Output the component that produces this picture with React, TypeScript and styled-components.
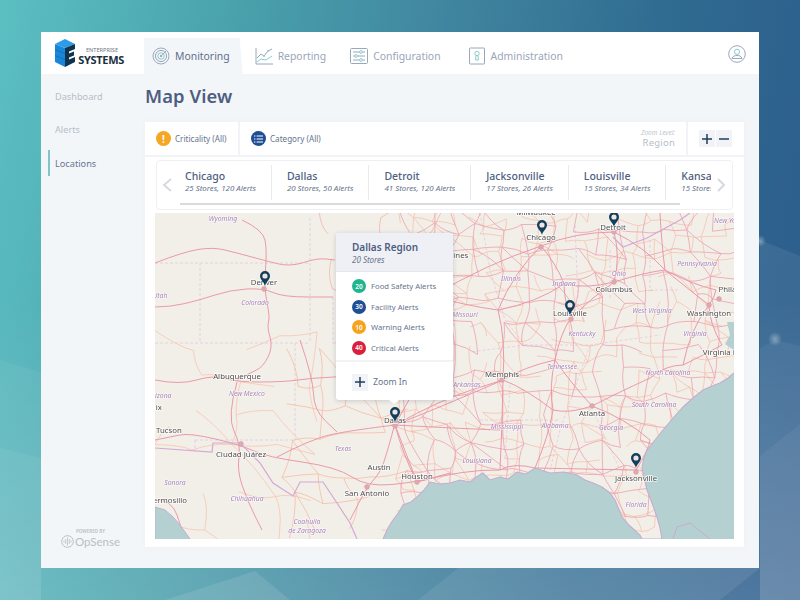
import React from "react";
import styled, { createGlobalStyle } from "styled-components";

const Global = createGlobalStyle`
  html, body { margin: 0; padding: 0; width: 800px; height: 600px; overflow: hidden; }
  body { font-family: "Noto Sans", "Open Sans", sans-serif; }
  * { box-sizing: border-box; }
`;

const Page = styled.div`
  position: relative; width: 800px; height: 600px; padding: 32px 41px; overflow: hidden;
  background: linear-gradient(100deg, #5bbfc2 0%, #4aa3ad 25%, #40859f 50%, #2f6a90 75%, #2d5b8c 100%);
`;
const Backdrop = styled.svg`position: absolute; left: 0; top: 0; width: 800px; height: 600px;`;
const Window = styled.div`
  position: relative; width: 718px; height: 536px; display: flex; flex-direction: column; background: #f3f6f9;
`;
const Header = styled.header`
  height: 42px; flex: none; background: #fff; display: flex; align-items: flex-end; position: relative;
`;
const LogoBox = styled.div`
  width: 103px; height: 42px; flex: none; display: flex; align-items: center; padding: 0 0 0 14px; gap: 3px;
`;
const LogoWords = styled.div`display: flex; flex-direction: column; align-items: flex-end; width: 46px; margin-top: 4px;`;
const LogoTop = styled.span`font-size: 5.6px; line-height: 8px; color: #6d7680; margin-right: 6px;`;
const LogoBottom = styled.span`font-size: 11px; line-height: 11px; font-weight: 700; color: #1b2f40; letter-spacing: -0.3px;`;
const Tabs = styled.nav`display: flex; gap: 4px; height: 36px; align-items: stretch;`;
const Tab = styled.div<{ $active?: boolean; $after?: number }>`
  display: flex; align-items: center; gap: 5px; padding: ${p => (p.$active ? "0 13px 0 8px" : "0 8px")};
  margin-right: ${p => p.$after ?? 0}px;
  background: ${p => (p.$active ? "#f3f6f9" : "transparent")};
  color: ${p => (p.$active ? "#5f6f8c" : "#9aa5b8")};
  font-size: 10.4px;
  clip-path: ${p => (p.$active ? "polygon(0 0, 97% 0, 100% 100%, 0 100%)" : "none")};
`;
const TabIcon = styled.svg`width: 18px; height: 18px; flex: none;`;
const UserIcon = styled.svg`position: absolute; right: 13px; top: 13px; width: 18px; height: 18px;`;
const Body = styled.div`flex: 1; display: flex; min-height: 0;`;
const Sidebar = styled.aside`
  width: 104px; flex: none; display: flex; flex-direction: column; padding: 9px 0 19px 7px;
`;
const SideItem = styled.div<{ $active?: boolean }>`
  height: 26px; flex: none; margin-bottom: 7.5px; display: flex; align-items: center; padding-left: 5px;
  border-left: 2px solid ${p => (p.$active ? "#84c3c8" : "transparent")};
  color: ${p => (p.$active ? "#66768e" : "#b6bdca")};
  font-size: 9.2px;
`;
const Powered = styled.div`
  margin-top: auto; display: flex; flex-direction: column; align-items: center; width: 51px; margin-left: 17px; color: #b9bec6;
`;
const PoweredBy = styled.span`font-size: 4.6px; line-height: 6px; font-weight: 600;`;
const OpSense = styled.div`display: flex; align-items: center; gap: 1px; font-family: "Lato", sans-serif; font-size: 11.5px; line-height: 15px;`;
const Main = styled.main`flex: 1; display: flex; flex-direction: column; min-width: 0; padding-right: 15px;`;
const Title = styled.h1`
  margin: 0; height: 48px; flex: none; display: flex; align-items: center; padding-bottom: 5px;
  font-size: 18.4px; font-weight: 600; color: #4e5e80; letter-spacing: 0.1px;
`;
const Panel = styled.section`background: #fff; flex: 1; margin-bottom: 21px; display: flex; flex-direction: column; box-shadow: 0 0 6px rgba(90,110,140,.05);`;
const Toolbar = styled.div`height: 35px; flex: none; display: flex; align-items: stretch; border-bottom: 2px solid #f1f3f6;`;
const Filter = styled.div<{ $width: number; $divided?: boolean }>`
  width: ${p => p.$width}px; flex: none; display: flex; align-items: center; gap: 4px; padding-left: 11px;
  border-right: ${p => (p.$divided ? 2 : 0)}px solid #f1f3f6;
  font-size: 8.1px; color: #66748c;
`;
const FilterDot = styled.span<{ $color: string }>`
  width: 15px; height: 15px; border-radius: 50%; background: ${p => p.$color}; flex: none;
  display: flex; align-items: center; justify-content: center; color: #fff; font-size: 10px; font-weight: 700;
`;
const Spacer = styled.div`flex: 1;`;
const ZoomLabel = styled.div`
  display: flex; flex-direction: column; align-items: flex-end; justify-content: center; padding-right: 11px;
  border-right: 2px solid #f1f3f6;
`;
const ZoomSmall = styled.span`font-size: 6.5px; line-height: 8px; font-style: italic; color: #c1c6d0;`;
const ZoomValue = styled.span`font-size: 9.5px; line-height: 12px; color: #b6bdca; letter-spacing: 0.2px;`;
const ZoomBtns = styled.div`flex: 0 0 56px; display: flex; align-items: center; gap: 1px; padding: 0 10px 0 11px;`;
const SquareBtn = styled.div`
  width: 16px; height: 17px; flex: none; background: #f1f3f7; display: flex; align-items: center; justify-content: center;
`;
const Glyph = styled.svg`width: 12px; height: 12px;`;
const Carousel = styled.div`
  height: 50px; flex: none; margin: 3px 11px 3px 11px; border: 1px solid #eef0f3; border-radius: 4px; position: relative;
  display: flex; align-items: flex-start; padding-top: 4px;
`;
const Chevron = styled.svg<{ $side: "left" | "right" }>`
  width: ${p => (p.$side === "left" ? 16 : 14)}px; height: 16px; flex: none; margin: 12px ${p => (p.$side === "left" ? 0 : 7)}px 0 0;
`;
const Track = styled.div`flex: 1; overflow: hidden; display: flex; min-width: 0; height: 36px; margin-left: -3px;`;
const City = styled.div`
  flex: none; height: 35px; padding: 4px 15px 0 15px; border-right: 1px solid #e8ebef; display: flex; flex-direction: column;
  &:last-child { border-right: 0; }
`;
const CityName = styled.span`font-size: 10.5px; line-height: 14px; font-weight: 500; color: #4e5e80;`;
const CityMeta = styled.span`font-size: 7.9px; line-height: 11px; font-style: italic; color: #66748c; white-space: nowrap;`;
const Scrollbar = styled.div`position: absolute; left: 23px; bottom: 4px; width: 500px; height: 2px; background: #d9dbde;`;
const MapFrame = styled.div`position: relative; flex: none; width: 579px; height: 326px; margin-left: 10px; overflow: hidden;`;
const MapSvg = styled.svg`display: block; width: 579px; height: 326px; filter: blur(0.35px);`;
const CityLabel = styled.text`
  font-family: "Noto Sans", sans-serif; font-size: 7.8px; fill: #4f4f4f; text-anchor: middle;
  paint-order: stroke; stroke: rgba(255,255,255,.75); stroke-width: 1.6px;
`;
const RegionLabel = styled.text`
  font-family: "Noto Sans", sans-serif; font-size: 6.8px; font-style: italic; fill: #a884b8; text-anchor: middle;
  paint-order: stroke; stroke: rgba(255,255,255,.6); stroke-width: 1.2px;
`;
const Popup = styled.div`
  position: absolute; left: 181px; top: 20px; width: 117px; height: 167px; background: #fff; border-radius: 3px;
  box-shadow: 0 1px 5px rgba(60,70,90,.22); display: flex; flex-direction: column;
  &::after { content: ""; position: absolute; left: 53px; bottom: -4px; border: 5px solid transparent; border-bottom: 0; border-top: 4px solid #fff; }
`;
const PopupHead = styled.div`
  height: 39px; flex: none; background: #eef0f5; border-radius: 3px 3px 0 0; padding: 7px 0 0 16px; border-bottom: 1px solid #e4e7ec;
  display: flex; flex-direction: column;
`;
const PopupTitle = styled.span`font-size: 10px; line-height: 14px; font-weight: 600; color: #4e5e80;`;
const PopupSub = styled.span`font-size: 8px; line-height: 11px; font-style: italic; color: #66748c;`;
const AlertList = styled.div`flex: none; height: 90px; padding: 4px 0 0 16px; border-bottom: 2px solid #f1f3f6; display: flex; flex-direction: column;`;
const AlertRow = styled.div`height: 20.5px; flex: none; display: flex; align-items: center; gap: 5px; font-size: 7.7px; color: #66748c;`;
const Badge = styled.span<{ $color: string }>`
  width: 14px; height: 14px; border-radius: 50%; background: ${p => p.$color}; color: #fff; flex: none;
  display: flex; align-items: center; justify-content: center; font-size: 6.5px; font-weight: 600;
`;
const ZoomIn = styled.div`flex: 1; display: flex; align-items: center; gap: 5px; padding: 2px 0 0 16px; font-size: 8.7px; color: #66748c;`;

// ---------- map data (page coordinates; viewBox maps them into the frame) ----------
const rng = (() => { let s = 12345; return () => (s = (s * 16807) % 2147483647) / 2147483647; })();
const f = (v: number) => v.toFixed(1);
function curve(a: [number, number], b: [number, number], amount: number) {
  const mx = (a[0] + b[0]) / 2 + (rng() - .5) * amount, my = (a[1] + b[1]) / 2 + (rng() - .5) * amount;
  return `M${f(a[0])} ${f(a[1])}Q${f(mx)} ${f(my)} ${f(b[0])} ${f(b[1])}`;
}
function mesh(x0: number, x1: number, y0: number, y1: number, step: number, jit: number, keep: number) {
  const cols = Math.ceil((x1 - x0) / step) + 1, rows = Math.ceil((y1 - y0) / step) + 1;
  const pts: [number, number][][] = [];
  for (let r = 0; r < rows; r++) {
    pts.push([]);
    for (let c = 0; c < cols; c++) pts[r].push([x0 + c * step + (rng() - .5) * jit, y0 + r * step + (rng() - .5) * jit]);
  }
  let d = "";
  const w = step * .35;
  for (let r = 0; r < rows; r++) for (let c = 0; c < cols; c++) {
    const p = pts[r][c];
    if (c + 1 < cols && rng() < keep) d += curve(p, pts[r][c + 1], w);
    if (r + 1 < rows && rng() < keep) d += curve(p, pts[r + 1][c], w);
    if (c + 1 < cols && r + 1 < rows && rng() < keep * .3) d += curve(p, pts[r + 1][c + 1], w);
  }
  return d;
}
function smooth(d: string) {
  return d.split("M").filter(Boolean).map(sub => {
    const n = sub.split(/[L\s]+/).filter(Boolean).map(Number);
    const pts: [number, number][] = [];
    for (let i = 0; i < n.length; i += 2) pts.push([n[i], n[i + 1]]);
    let out = `M${pts[0][0]} ${pts[0][1]}`;
    for (let i = 1; i < pts.length - 1; i++) {
      out += `Q${pts[i][0]} ${pts[i][1]} ${f((pts[i][0] + pts[i + 1][0]) / 2)} ${f((pts[i][1] + pts[i + 1][1]) / 2)}`;
    }
    const e = pts[pts.length - 1];
    return out + `L${e[0]} ${e[1]}`;
  }).join("");
}
const eastPink = mesh(405, 745, 205, 500, 24, 14, .78);
const eastOrange = mesh(400, 745, 205, 520, 17, 11, .6);
const midOrange = mesh(290, 410, 350, 535, 30, 18, .6);
const westOrange = mesh(160, 300, 340, 535, 38, 22, .42);
const northOrange = mesh(325, 420, 210, 350, 28, 16, .55);

const westPink = [
  "M155 263L183 252L213 247L237 253L263 260L290 267L317 258L335 260",
  "M242 220L263 230L267 250L264 288L270 317L267 327L273 347L263 367L250 373L237 380",
  "M155 307L170 307L200 300L230 290L263 288L283 297L333 297",
  "M155 380L180 385L213 375L237 382L283 382L313 378L337 377L395 372",
  "M237 382L227 417L241 445L237 470L247 500L262 530",
  "M155 440L170 437L190 433L241 445L267 457L337 467L367 487L417 482L450 473",
  "M395 423L388 450L380 473L367 487L350 520",
  "M395 425L337 432L307 442L277 457",
  "M395 425L417 482",
  "M395 425L440 400L503 380",
  "M395 425L450 428L500 430",
  "M300 340L313 378L314 410L337 432",
  "M155 500L172 500L182 530",
].map(smooth);
const nodes: Record<string, [number, number]> = {
  chi: [541, 246], det: [614, 232], col: [614, 282], lou: [571, 318], mem: [503, 380], atl: [592, 406],
  dal: [395, 425], stl: [498, 310], nas: [555, 360], cha: [650, 378], ral: [683, 365], bir: [553, 410],
  no: [500, 470], hou: [417, 482], vab: [722, 345], phi: [716, 290], pit: [665, 270], jax: [636, 470],
  was: [709, 305], ind: [564, 284], kc: [433, 296], tul: [425, 370], sav: [650, 440], mob: [535, 468], top: [660, 213],
};
const edges = "chi-ind ind-lou lou-nas nas-atl nas-bir bir-atl atl-sav sav-jax atl-cha cha-ral ral-vab ral-was was-phi phi-pit pit-col col-ind col-det det-chi chi-stl stl-ind stl-mem mem-nas mem-bir stl-kc kc-tul tul-dal dal-mem mem-no no-mob mob-jax mob-bir no-hou hou-dal pit-was lou-col was-vab top-pit chi-kc det-pit".split(" ");
const mainRoads = edges.map(e => {
  const [a, b] = e.split("-");
  return curve(nodes[a], nodes[b], 14);
}).join("");

const sea = "M383 539L388 528L393 520L399 512L403 505L411 502L417 497L424 490L430 482L440 484L450 483L460 480L470 482L478 476L483 473L490 480L500 477L508 479L517 472L526 474L535 468L550 473L564 472L577 475L585 480L593 483L602 487L610 493L615 500L618 507L622 517L630 526L640 535L642 539L662 539L660 528L657 517L652 503L647 490L644 478L642 467L644 458L647 450L655 440L663 430L673 418L683 407L693 398L703 390L712 386L720 383L728 378L734 373L745 360L745 545L380 545Z";
const baja = "M155 507L165 510L173 517L180 525L190 539L155 545Z";
const chesa = "M727 322L730 335L725 344L734 350L740 345L736 322Z";
const borders = [
  "M155 448L212 452L213 443L240 443L260 463L273 483L293 496L300 482L323 482L337 503L350 523L357 539",
  "M613 237L623 247L647 238L680 220L690 213",
  "M673 539L677 527L690 523L710 539",
];
const stateLines = [
  "M200 263V343M155 263H310M155 343H310M310 218V343M295 343V440M195 440H295M195 440V452M333 343H420M333 297V343M420 343V385M420 385L460 392",
  "M480 213L490 270L505 320L525 345M525 345L470 352M525 345L590 345L660 335M575 225L578 300M610 250V300M650 240V290L680 290M590 345L560 430L550 470M510 385L505 460M595 415L620 470L640 470M480 420H560",
];
const cities: [string, number, number][] = [
  ["Denver", 264, 285], ["Albuquerque", 237, 379], ["Phoenix", 147, 410], ["Tucson", 169, 433], ["Ciudad Juárez", 241, 457],
  ["Austin", 379, 470], ["Houston", 417, 479], ["San Antonio", 367, 496], ["Hermosillo", 167, 503], ["Dallas", 395, 423],
  ["Chicago", 541, 240], ["Detroit", 613, 230], ["Milwaukee", 536, 215], ["Columbus", 614, 292], ["Louisville", 570, 316],
  ["Memphis", 502, 377], ["Atlanta", 592, 416], ["Washington", 709, 316], ["Philadelphia", 741, 292], ["Virginia Beach", 729, 355],
  ["Jacksonville", 636, 481], ["Des Moines", 447, 258],
];
const regions: [string, number, number][] = [
  ["Wyoming", 223, 221], ["Utah", 160, 298], ["Colorado", 255, 305], ["Arizona", 160, 398], ["New Mexico", 247, 396], ["Texas", 343, 451],
  ["Sonora", 175, 485], ["Chihuahua", 247, 501], ["Coahuila", 307, 524], ["de Zaragoza", 307, 533], ["Nebraska", 350, 252], ["Missouri", 465, 317],
  ["Illinois", 511, 281], ["Indiana", 564, 286], ["Ohio", 619, 276], ["Pennsylvania", 697, 266], ["New York", 728, 223], ["Kentucky", 582, 336],
  ["West Virginia", 652, 313], ["Virginia", 695, 336], ["Tennessee", 562, 369], ["North Carolina", 668, 375], ["South Carolina", 654, 407],
  ["Arkansas", 467, 387], ["Mississippi", 507, 429], ["Alabama", 555, 428], ["Georgia", 611, 430], ["Louisiana", 477, 463], ["Florida", 636, 507],
];
const pins: [number, number][] = [[265, 286], [395, 422], [542, 235], [614, 227], [570, 315], [636, 468]];
const hubs: [number, number][] = [[264, 289], [395, 426], [541, 247], [614, 232], [571, 319], [636, 472], [502, 380], [592, 406], [709, 305], [417, 482], [367, 487], [241, 444], [614, 282], [719, 299]];

const Pin = ({ x, y }: { x: number; y: number }) => (
  <g transform={`translate(${x} ${y})`}>
    <path d="M0 0C-.8-4-5-6.2-5-10A5 5 0 1 1 5-10C5-6.2.8-4 0 0Z" fill="#123f5c" />
    <circle cx="0" cy="-10" r="2.6" fill="#f4e4df" />
  </g>
);

const CarouselItems = [
  ["Chicago", "25  Stores, 120 Alerts"], ["Dallas", "20  Stores, 50 Alerts"], ["Detroit", "41  Stores, 120 Alerts"],
  ["Jacksonville", "17  Stores, 26 Alerts"], ["Louisville", "15  Stores, 34 Alerts"], ["Kansas City", "15  Stores, 22 Alerts"],
];
const Alerts: [string, string, string][] = [
  ["20", "#1fb58f", "Food Safety Alerts"], ["30", "#1f4e96", "Facility Alerts"], ["10", "#f5a31c", "Warning Alerts"], ["40", "#d81f3c", "Critical Alerts"],
];

const ic = { fill: "none", stroke: "#9aa8bc", strokeWidth: 1 };
const ac = { fill: "none", stroke: "#8ccbd0", strokeWidth: 1 };

const Plus = () => (
  <Glyph viewBox="0 0 12 12"><path d="M6 1V11M1 6H11" stroke="#1f3f5c" strokeWidth="1.5" /></Glyph>
);

export default function App() {
  return (
    <Page>
      <Global />
      <Backdrop viewBox="0 0 800 600">
        <defs>
          <linearGradient id="fade" x1="0" y1="0" x2="0" y2="1">
            <stop offset="0.5" stopColor="#fff" stopOpacity="0" />
            <stop offset="1" stopColor="#fff" stopOpacity="0.16" />
          </linearGradient>
          <radialGradient id="glow"><stop offset="0" stopColor="#fff" stopOpacity=".35" /><stop offset="1" stopColor="#fff" stopOpacity="0" /></radialGradient>
        </defs>
        <rect width="800" height="600" fill="url(#fade)" />
        <polygon points="0,360 41,372 41,600 0,600" fill="#fff" opacity=".05" />
        <polygon points="0,448 41,458 41,600 0,600" fill="#fff" opacity=".06" />
        <polygon points="760,240 800,256 800,600 760,600" fill="#fff" opacity=".07" />
        <polygon points="760,348 775,340 800,346 800,600 760,600" fill="#fff" opacity=".05" />
        <polygon points="760,456 800,424 800,600 760,600" fill="#fff" opacity=".05" />
        <polygon points="255,571 165,600 290,600" fill="#fff" opacity=".1" />
        <polygon points="458,568 418,600 720,600 760,568" fill="#fff" opacity=".08" />
        <circle cx="775" cy="339" r="7" fill="url(#glow)" />
        <circle cx="760" cy="241" r="6" fill="url(#glow)" />
      </Backdrop>
      <Window>
        <Header>
          <LogoBox>
            <svg width="20" height="28" viewBox="0 0 20 28">
              <polygon points="0,5 10,9 10,28 0,23" fill="#1a86d8" />
              <path d="M0 10.5L10 14.5M0 16.5L10 20.5" stroke="#0f6db5" strokeWidth=".8" />
              <polygon points="0,5 10,0 20,5 10,9" fill="#2b9ce8" />
              <polygon points="10,9 20,5 20,10 14,12.4 14,14.4 19,12.4 19,16.4 14,18.4 14,20.4 20,18 20,23 10,28" fill="#10344e" />
            </svg>
            <LogoWords>
              <LogoTop>ENTERPRISE</LogoTop>
              <LogoBottom>SYSTEMS</LogoBottom>
            </LogoWords>
          </LogoBox>
          <Tabs>
            <Tab $active>
              <TabIcon viewBox="0 0 18 18">
                <circle cx="9" cy="9" r="8" {...ic} /><circle cx="9" cy="9" r="5.6" {...ic} /><circle cx="9" cy="9" r="3.2" {...ac} />
                <circle cx="9" cy="9" r="1.1" fill="#8a98ae" /><path d="M9 9L14 4" {...ic} />
              </TabIcon>
              Monitoring
            </Tab>
            <Tab $after={4}>
              <TabIcon viewBox="0 0 18 18">
                <path d="M1 1V17H18" {...ic} /><path d="M2 11L6 7L9 9L13 4L17 2" {...ic} /><path d="M2 15L6 12L11 13L17 9" {...ac} />
                <circle cx="9" cy="9" r="1" fill="#8ccbd0" /><circle cx="13" cy="4" r="1" fill="#8ccbd0" />
              </TabIcon>
              Reporting
            </Tab>
            <Tab $after={7}>
              <TabIcon viewBox="0 0 18 18">
                <rect x=".5" y="1.5" width="17" height="15" rx="1" {...ic} />
                <path d="M3 5H15M3 9H15M3 13H15" {...ic} />
                <circle cx="11" cy="5" r="1.4" fill="#fff" stroke="#8ccbd0" /><circle cx="6" cy="9" r="1.4" fill="#fff" stroke="#8ccbd0" /><circle cx="11" cy="13" r="1.4" fill="#fff" stroke="#8ccbd0" />
              </TabIcon>
              Configuration
            </Tab>
            <Tab>
              <TabIcon viewBox="0 0 18 18">
                <rect x="1.5" y="1" width="15" height="16" rx=".5" {...ic} />
                <circle cx="9" cy="6.5" r="2.2" {...ac} /><path d="M8 8.5L7.6 13H10.4L10 8.5" {...ac} />
              </TabIcon>
              Administration
            </Tab>
          </Tabs>
          <UserIcon viewBox="0 0 18 18">
            <circle cx="9" cy="9" r="8.3" {...ic} />
            <circle cx="9" cy="6.8" r="2.6" {...ac} />
            <path d="M4 13.5C4.5 11 7 10.5 9 10.5S13.5 11 14 13.5Z" {...ic} />
          </UserIcon>
        </Header>
        <Body>
          <Sidebar>
            <SideItem>Dashboard</SideItem>
            <SideItem>Alerts</SideItem>
            <SideItem $active>Locations</SideItem>
            <Powered>
              <PoweredBy>POWERED BY</PoweredBy>
              <OpSense>
                <svg width="13" height="13" viewBox="0 0 13 13">
                  <circle cx="6.5" cy="6.5" r="5.8" fill="none" stroke="#b9bec6" />
                  <path d="M3 5.5V7.5M4.7 4V9M6.5 2.5V10.5M8.3 4V9M10 5.5V7.5" stroke="#b9bec6" strokeWidth=".8" />
                </svg>
                OpSense
              </OpSense>
            </Powered>
          </Sidebar>
          <Main>
            <Title>Map View</Title>
            <Panel>
              <Toolbar>
                <Filter $width={95} $divided><FilterDot $color="#f5a623">!</FilterDot>Criticality (All)</Filter>
                <Filter $width={110}>
                  <FilterDot $color="#1f4e96">
                    <svg width="9" height="8" viewBox="0 0 9 8"><path d="M0 1H1.4M2.6 1H9M0 4H1.4M2.6 4H9M0 7H1.4M2.6 7H9" stroke="#fff" strokeWidth="1.1" /></svg>
                  </FilterDot>
                  Category (All)
                </Filter>
                <Spacer />
                <ZoomLabel><ZoomSmall>Zoom Level:</ZoomSmall><ZoomValue>Region</ZoomValue></ZoomLabel>
                <ZoomBtns>
                  <SquareBtn><Plus /></SquareBtn>
                  <SquareBtn><Glyph viewBox="0 0 12 12"><path d="M1 6H11" stroke="#1f3f5c" strokeWidth="1.5" /></Glyph></SquareBtn>
                </ZoomBtns>
              </Toolbar>
              <Carousel>
                <Chevron $side="left" viewBox="0 0 16 16"><path d="M14 2L7 8L14 14" fill="none" stroke="#d6d9de" strokeWidth="2" /></Chevron>
                <Track>
                  {CarouselItems.map(([n, m]) => (
                    <City key={n}><CityName>{n}</CityName><CityMeta>{m}</CityMeta></City>
                  ))}
                </Track>
                <Chevron $side="right" viewBox="0 0 14 16"><path d="M7 2L13 8L7 14" fill="none" stroke="#d6d9de" strokeWidth="2" /></Chevron>
                <Scrollbar />
              </Carousel>
              <MapFrame>
                <MapSvg viewBox="155 213 579 326">
                  <rect x="150" y="205" width="600" height="340" fill="#f2efe9" />
                  <path d={stateLines.join("")} fill="none" stroke="#e3c9dc" strokeWidth=".8" strokeDasharray="3 2" />
                  <path d={westOrange} fill="none" stroke="#f7c0a8" strokeWidth=".7" />
                  <path d={midOrange} fill="none" stroke="#f6b9a2" strokeWidth=".75" />
                  <path d={northOrange} fill="none" stroke="#f4b0a6" strokeWidth=".75" />
                  <path d={eastOrange} fill="none" stroke="#f7bba6" strokeWidth=".7" />
                  <path d={eastPink} fill="none" stroke="#ed9fad" strokeWidth=".8" />
                  <path d={westPink.join("")} fill="none" stroke="#ea9aa8" strokeWidth="1" />
                  <path d={mainRoads} fill="none" stroke="#ea93a5" strokeWidth=".95" />
                  {hubs.map(([x, y]) => (
                    <circle key={x} cx={x} cy={y} r="2.4" fill="#e7a5ae" stroke="#c9a3a8" strokeWidth=".6" />
                  ))}
                  <path d={borders[0]} fill="none" stroke="#d4a9d3" strokeWidth="1.2" />
                  <path d={sea} fill="#b5d0d0" stroke="#c3aed0" strokeWidth="1.1" />
                  <path d={baja} fill="#b5d0d0" stroke="#c3aed0" strokeWidth="1" />
                  <path d={chesa} fill="#b5d0d0" />
                  <path d={borders[1]} fill="none" stroke="#d4a9d3" strokeWidth="1.2" />
                  <path d={borders[2]} fill="none" stroke="#c3aed0" strokeWidth="1" />
                  {regions.map(([t, x, y]) => <RegionLabel key={t} x={x} y={y}>{t}</RegionLabel>)}
                  {cities.map(([t, x, y]) => <CityLabel key={t} x={x} y={y}>{t}</CityLabel>)}
                  {pins.map(([x, y]) => <Pin key={x} x={x} y={y} />)}
                </MapSvg>
                <Popup>
                  <PopupHead>
                    <PopupTitle>Dallas Region</PopupTitle>
                    <PopupSub>20  Stores</PopupSub>
                  </PopupHead>
                  <AlertList>
                    {Alerts.map(([n, c, t]) => (
                      <AlertRow key={t}><Badge $color={c}>{n}</Badge>{t}</AlertRow>
                    ))}
                  </AlertList>
                  <ZoomIn><SquareBtn><Plus /></SquareBtn>Zoom In</ZoomIn>
                </Popup>
              </MapFrame>
            </Panel>
          </Main>
        </Body>
      </Window>
    </Page>
  );
}
